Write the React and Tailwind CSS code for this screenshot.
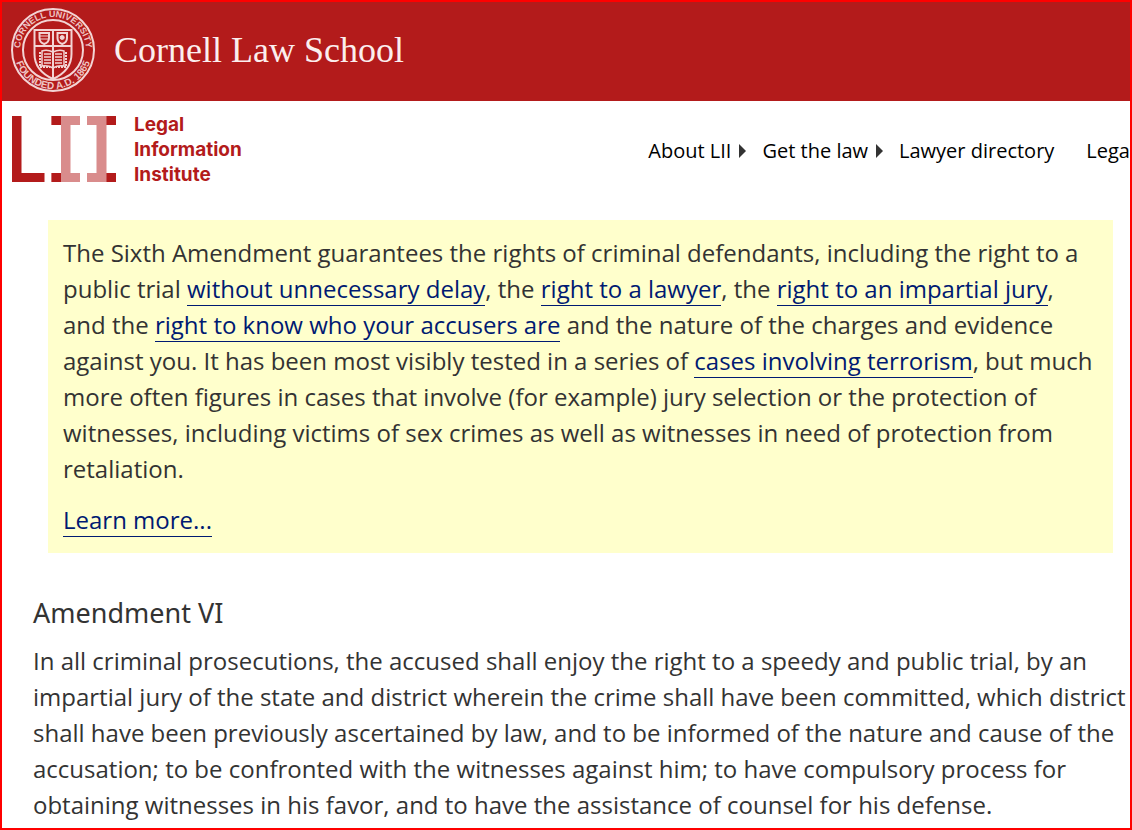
import React from "react"
import { clsx } from "clsx"

const navItems = [
  { label: "About LII", hasMenu: true },
  { label: "Get the law", hasMenu: true },
  { label: "Lawyer directory", hasMenu: false },
  { label: "Lega", hasMenu: false },
]

const CornellSeal = () => (
  <svg
    className="h-[86px] w-[86px] shrink-0"
    viewBox="0 0 86 86"
    fill="none"
    stroke="#f3d4d4"
    aria-label="Cornell University seal"
  >
    <defs>
      <path id="seal-top" d="M 12 54.3 A 33 33 0 1 1 74 54.3" />
      <path id="seal-bottom" d="M 4.6 36.2 A 39 39 0 1 0 81.4 36.2" />
    </defs>
    <circle cx="43" cy="43" r="41" strokeWidth="2" />
    <circle cx="43" cy="43" r="30" strokeWidth="2" />
    <g
      fill="#eec4c4"
      stroke="none"
      fontFamily="'Liberation Sans', sans-serif"
      fontSize="9"
      fontWeight="bold"
      textAnchor="middle"
    >
      <text>
        <textPath href="#seal-top" startOffset="50%">
          CORNELL UNIVERSITY
        </textPath>
      </text>
      <text fontSize="10">
        <textPath href="#seal-bottom" startOffset="50%">
          FOUNDED A.D. 1865
        </textPath>
      </text>
    </g>
    {/* shield */}
    <path
      d="M24.5 23 H61.5 V47 C61.5 59 54 67 43 72 C32 67 24.5 59 24.5 47 Z"
      strokeWidth="2"
    />
    <path d="M25 39 H61 M43 23 V39" strokeWidth="2" />
    <path d="M29.5 26 H39 V31 Q39 35.5 34.2 37 Q29.5 35.5 29.5 31 Z" strokeWidth="2" />
    <path d="M30 29 H39 M30 32 H39" strokeWidth="1" />
    <path d="M47.5 26 H57 V31 Q57 35.5 52.2 37 Q47.5 35.5 47.5 31 Z" strokeWidth="2" />
    <circle cx="52.2" cy="30.5" r="2" fill="#f3d4d4" strokeWidth="1" />
    {/* open book */}
    <path
      d="M43 45 Q37 42 32 44 V59 Q38 58 43 61 Q48 58 54 59 V44 Q49 42 43 45 Z"
      strokeWidth="1.5"
    />
    <path d="M43 39 V71" strokeWidth="2" />
    <path
      d="M34 47 H41 M34 50 H41 M34 53 H41 M34 56 H41 M45 47 H52 M45 50 H52 M45 53 H52 M45 56 H52"
      strokeWidth="1.5"
    />
    <path d="M30 45 V60 H40 M56 45 V60 H46" strokeWidth="2" strokeDasharray="2 1" />
  </svg>
)

const LiiMark = () => (
  <svg className="h-[66px] w-[104px] shrink-0" viewBox="0 0 104 66" aria-hidden="true">
    <path d="M0 0 H9.5 V57 H32.5 V66 H0 Z" fill="#b31b1b" />
    <path d="M39.5 0 H68 V9 H58.5 V57 H68 V66 H39.5 V57 H49 V9 H39.5 Z" fill="#d98c8c" />
    <path d="M75 0 H104 V9 H94.5 V57 H104 V66 H75 V57 H84.5 V9 H75 Z" fill="#d98c8c" />
    <path d="M39.5 0 H49 V9 H39.5 Z M39.5 57 H49 V66 H39.5 Z" fill="#b31b1b" />
    <path d="M94.5 0 H104 V9 H94.5 Z M94.5 57 H104 V66 H94.5 Z" fill="#b31b1b" />
  </svg>
)

const MenuArrow = () => (
  <svg className="ml-2 h-[14px] w-[7px]" viewBox="0 0 7 14" aria-hidden="true">
    <path d="M0 0 L7 7 L0 14 Z" fill="#333333" />
  </svg>
)

const TextLink = ({ children }) => (
  <a href="#" className="border-b border-[#001a72] text-[#001a72]">
    {children}
  </a>
)

const SiteHeader = () => (
  <header>
    <div className="flex h-[99px] items-center bg-[#b31b1b] pb-[3px] pl-2">
      <a href="#" className="flex items-center gap-[18px] text-white">
        <CornellSeal />
        <span className="font-['Liberation_Serif',serif] text-[36px] leading-[40px] whitespace-nowrap text-[#fbeeee]">
          Cornell Law School
        </span>
      </a>
    </div>

    <div className="flex items-start justify-between pt-[11px] pl-[10px]">
      <a href="#" className="flex shrink-0 items-start gap-[18px]">
        <span className="pt-1">
          <LiiMark />
        </span>
        <span className="font-[Inter,sans-serif] text-[19px] leading-[25px] font-bold text-[#b31b1b]">
          Legal
          <br />
          Information
          <br />
          Institute
        </span>
      </a>
      <nav className="flex pt-[25px] text-[20px] leading-[28px] whitespace-nowrap text-black">
        {navItems.map(({ label, hasMenu }, index) => (
          <a
            key={label}
            href="#"
            className={clsx(
              "flex items-center",
              hasMenu && "mr-4",
              !hasMenu && index < navItems.length - 1 && "mr-8"
            )}
          >
            {label}
            {hasMenu && <MenuArrow />}
          </a>
        ))}
      </nav>
    </div>
  </header>
)

const App = () => {
  return (
    <div className="overflow-hidden border-2 border-[#ff0000] bg-white pb-[5px] font-['Open_Sans',sans-serif] text-[#333333]">
      <SiteHeader />

      <main className="text-[24px] leading-[36px]">
        <section className="mt-[33px] mr-[17px] ml-[46px] bg-[#ffffcc] p-[15px]">
          <p>
            The Sixth Amendment guarantees the rights of criminal defendants,
            including the right to a public trial{" "}
            <TextLink>without unnecessary delay</TextLink>, the{" "}
            <TextLink>right to a lawyer</TextLink>, the{" "}
            <TextLink>right to an impartial jury</TextLink>, and the{" "}
            <TextLink>right to know who your accusers are</TextLink> and the
            nature of the charges and evidence against you. It has been most
            visibly tested in a series of{" "}
            <TextLink>cases involving terrorism</TextLink>, but much more often
            figures in cases that involve (for example) jury selection or the
            protection of witnesses, including victims of sex crimes as well as
            witnesses in need of protection from retaliation.
          </p>
          <p className="mt-[15px]">
            <TextLink>Learn more...</TextLink>
          </p>
        </section>

        <section className="mt-[42px] pl-[31px]">
          <h2 className="font-['Noto_Sans','Open_Sans',sans-serif] text-[27px] leading-[36px]">
            Amendment VI
          </h2>
          <p className="mt-3">
            In all criminal prosecutions, the accused shall enjoy the right to a
            speedy and public trial, by an impartial jury of the state and
            district wherein the crime shall have been committed, which district
            shall have been previously ascertained by law, and to be informed of
            the nature and cause of the accusation; to be confronted with the
            witnesses against him; to have compulsory process for obtaining
            witnesses in his favor, and to have the assistance of counsel for
            his defense.
          </p>
        </section>
      </main>
    </div>
  )
}

export default App
